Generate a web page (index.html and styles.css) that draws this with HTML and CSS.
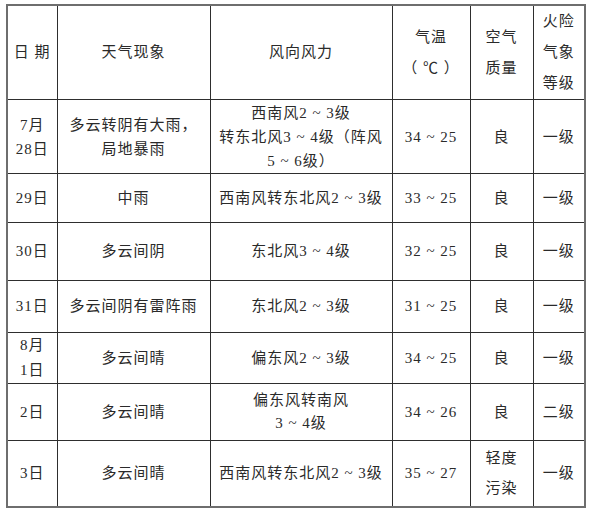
FILE: index.html
```html
<!DOCTYPE html>
<html lang="zh-CN">
<head>
<meta charset="utf-8">
<title>天气预报</title>
<link rel="stylesheet" href="styles.css">
</head>
<body>
<table class="wx">
  <colgroup>
    <col class="c1"><col class="c2"><col class="c3"><col class="c4"><col class="c5"><col class="c6">
  </colgroup>
  <tr class="r0 head">
    <td>日 期</td>
    <td>天气现象</td>
    <td>风向风力</td>
    <td>气温<br>（ ℃ ）</td>
    <td>空气<br>质量</td>
    <td>火险<br>气象<br>等级</td>
  </tr>
  <tr class="r1">
    <td>7月<br>28日</td>
    <td>多云转阴有大雨，<br>局地暴雨</td>
    <td>西南风2 ~ 3级<br>转东北风3 ~ 4级（阵风<br>5 ~ 6级）</td>
    <td>34 ~ 25</td>
    <td>良</td>
    <td>一级</td>
  </tr>
  <tr class="r2">
    <td>29日</td>
    <td>中雨</td>
    <td>西南风转东北风2 ~ 3级</td>
    <td>33 ~ 25</td>
    <td>良</td>
    <td>一级</td>
  </tr>
  <tr class="r3">
    <td>30日</td>
    <td>多云间阴</td>
    <td>东北风3 ~ 4级</td>
    <td>32 ~ 25</td>
    <td>良</td>
    <td>一级</td>
  </tr>
  <tr class="r4">
    <td>31日</td>
    <td>多云间阴有雷阵雨</td>
    <td>东北风2 ~ 3级</td>
    <td>31 ~ 25</td>
    <td>良</td>
    <td>一级</td>
  </tr>
  <tr class="r5">
    <td>8月<br>1日</td>
    <td>多云间晴</td>
    <td>偏东风2 ~ 3级</td>
    <td>34 ~ 25</td>
    <td>良</td>
    <td>一级</td>
  </tr>
  <tr class="r6">
    <td>2日</td>
    <td>多云间晴</td>
    <td>偏东风转南风<br>3 ~ 4级</td>
    <td>34 ~ 26</td>
    <td>良</td>
    <td>二级</td>
  </tr>
  <tr class="r7">
    <td>3日</td>
    <td>多云间晴</td>
    <td>西南风转东北风2 ~ 3级</td>
    <td>35 ~ 27</td>
    <td class="tall">轻度<br>污染</td>
    <td>一级</td>
  </tr>
</table>
</body>
</html>
```

FILE: styles.css
```css
html, body {
  margin: 0;
  padding: 0;
  background: #ffffff;
}
body {
  padding: 4px 0 0 6px;
  font-family: "Liberation Serif", "Noto Sans CJK SC", serif;
  color: #2a2a2a;
  font-size: 15px;
}
.wx {
  border-collapse: collapse;
  table-layout: fixed;
  width: 579px;
  border: 2px solid #6e6e6e;
}
.c1 { width: 50px; }
.c2 { width: 153px; }
.c3 { width: 182px; }
.c4 { width: 78px; }
.c5 { width: 63px; }
.c6 { width: 52px; }
.wx td {
  border: 1px solid #2e2e2e;
  text-align: center;
  vertical-align: middle;
  padding: 0;
  line-height: 25px;
  letter-spacing: 1px;
  white-space: nowrap;
}
.head td { line-height: 31px; }
.r1 td { line-height: 24px; }
.r6 td { line-height: 23px; }
.wx td.tall { line-height: 30px; }
.r0 { height: 94px; }
.r1 { height: 74px; }
.r2 { height: 49px; }
.r3 { height: 58px; }
.r4 { height: 52px; }
.r5 { height: 49px; }
.r6 { height: 57px; }
.r7 { height: 66px; }
```
